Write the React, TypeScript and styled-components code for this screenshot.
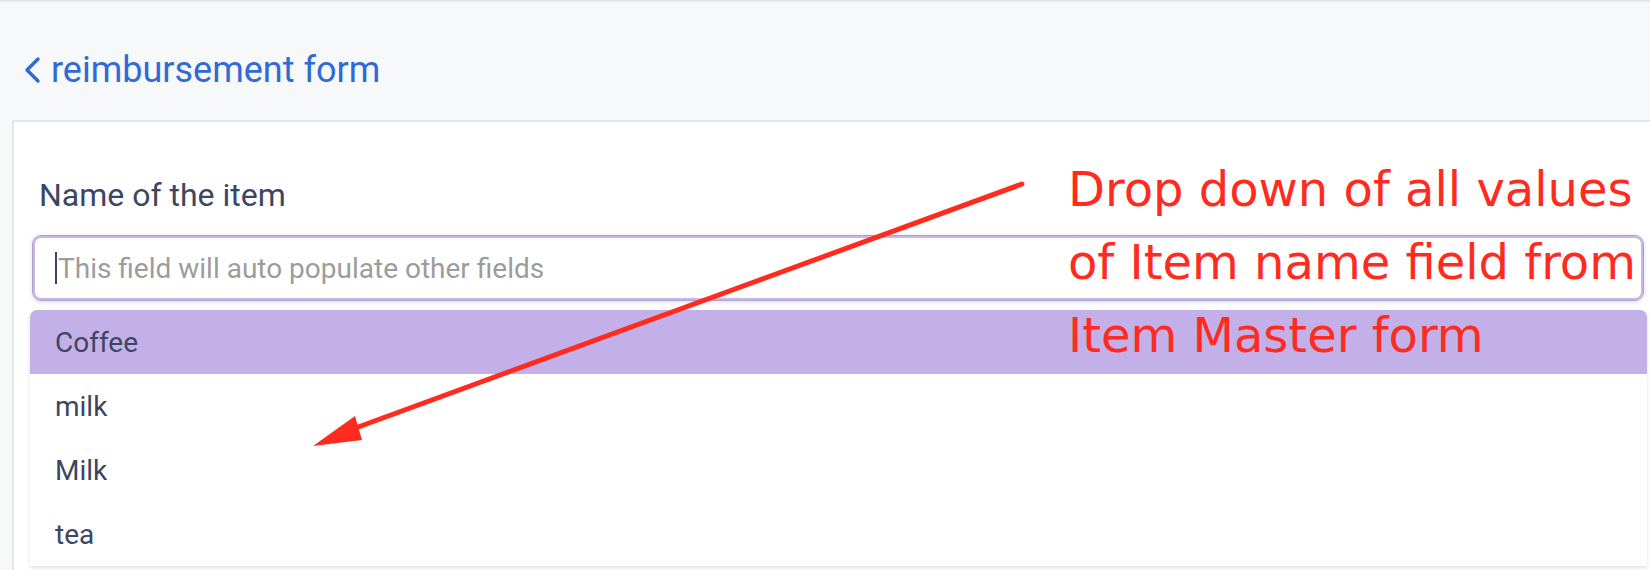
import styled, { createGlobalStyle } from 'styled-components';

const GlobalStyle = createGlobalStyle`
    html, body {
        margin: 0;
        padding: 0;
        background: #f7f8fa;
        overflow: hidden;
    }
    body {
        font-family: Roboto, "Liberation Sans", sans-serif;
    }
`

const Page = styled.div`
    position: relative;
    width: 1650px;
    height: 570px;
    overflow: hidden;
    box-shadow: inset 0 3px 3px -2px rgba(0, 0, 0, 0.12);
`

const Header = styled.div`
    height: 120px;
    display: flex;
    align-items: center;
    padding-left: 22px;
    padding-top: 19px;
    box-sizing: border-box;
`

const BackLink = styled.a`
    display: flex;
    align-items: center;
    gap: 9px;
    color: #2f6ad6;
    font-size: 36px;
    text-decoration: none;
    cursor: pointer;

    svg {
        width: 20px;
        height: 28px;
    }
`

const Card = styled.div`
    margin-left: 12px;
    width: 1660px;
    height: 460px;
    background: #fff;
    border-top: 2px solid #e4e5e8;
    border-left: 2px solid #e4e5e8;
    box-sizing: border-box;
    padding: 55px 0 0 18px;
`

const Label = styled.div`
    color: #3c4664;
    font-size: 32px;
    padding-left: 7px;
    height: 36px;
    line-height: 36px;
    margin-bottom: 22px;
`

const Input = styled.div`
    width: 1612px;
    height: 66px;
    box-sizing: border-box;
    border: 1px solid #aea3c6;
    box-shadow: inset 0 0 0 2px #c7b6ea, 0 1px 4px rgba(120, 100, 170, 0.25);
    border-radius: 9px;
    display: flex;
    align-items: center;
    padding-left: 22px;
    font-size: 28px;
    color: #9c9c9c;
`

const Caret = styled.span`
    width: 2px;
    height: 32px;
    background: #3c4664;
    margin-right: 1px;
`

const Dropdown = styled.ul`
    list-style: none;
    margin: 9px 0 0 -2px;
    padding: 0;
    width: 1617px;
    background: #fff;
    border-radius: 7px 7px 0 0;
    box-shadow: 0 2px 4px rgba(0, 0, 0, 0.12);
    overflow: hidden;
`

const Option = styled.li<{ active?: boolean }>`
    height: 64px;
    display: flex;
    align-items: center;
    padding-left: 25px;
    font-size: 28px;
    color: #3c4664;
    background: ${props => props.active ? '#c4b0e9' : '#fff'};
`

const Note = styled.div`
    position: absolute;
    left: 1068px;
    top: 153px;
    color: #ff2b1f;
    font-family: "DejaVu Sans", Verdana, sans-serif;
    font-size: 48px;
    line-height: 73px;
`

const Arrow = styled.svg`
    position: absolute;
    left: 0;
    top: 0;
    pointer-events: none;
`

const items = ['Coffee', 'milk', 'Milk', 'tea'];

export default function App() {
    return (
        <Page>
            <GlobalStyle />
            <Header>
                <BackLink>
                    <svg viewBox="0 0 20 28" fill="none">
                        <path d="M16 3 L5 14 L16 25" stroke="#2f6ad6" strokeWidth="3.4" strokeLinecap="round" strokeLinejoin="round" />
                    </svg>
                    reimbursement form
                </BackLink>
            </Header>
            <Card>
                <Label>Name of the item</Label>
                <Input>
                    <Caret />
                    This field will auto populate other fields
                </Input>
                <Dropdown>
                    {items.map((it, i) => (
                        <Option key={it} active={i === 0}>{it}</Option>
                    ))}
                </Dropdown>
            </Card>

            <Note>
                Drop down of all values<br />
                of Item name field from<br />
                Item Master form
            </Note>
            <Arrow width="1650" height="570" viewBox="0 0 1650 570">
                <line x1="1022" y1="184" x2="350" y2="430" stroke="#ff2b1f" strokeWidth="5" strokeLinecap="round" />
                <polygon points="313,446 355,416 362,440" fill="#ff2b1f" />
            </Arrow>
        </Page>
    )
}
